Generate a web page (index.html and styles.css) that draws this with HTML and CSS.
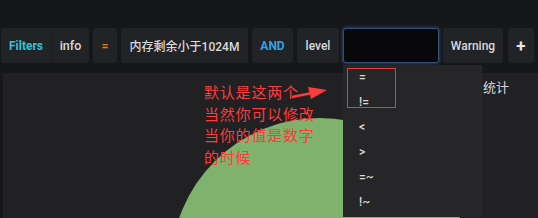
FILE: index.html
```html
<!DOCTYPE html>
<html lang="zh">
<head>
<meta charset="utf-8">
<link rel="stylesheet" href="styles.css">
</head>
<body>
<div class="page">
  <div class="bar">
    <div class="seg seg-filters first kw-cyan">Filters</div>
    <div class="seg seg-info">info</div>
    <div class="seg seg-op op">=</div>
    <div class="seg seg-value">内存剩余小于1024M</div>
    <div class="seg seg-and kw-blue">AND</div>
    <div class="seg seg-level">level</div>
    <div class="seg seg-input input"></div>
    <div class="seg seg-warning">Warning</div>
    <div class="seg seg-plus plus">+</div>
  </div>
  <div class="panel">
    <div class="panel-title">统计</div>
    <div class="pie"></div>
  </div>

  <div class="note">
    <div class="note-line">默认是这两个</div>
    <div class="note-line">当然你可以修改</div>
    <div class="note-line">当你的值是数字</div>
    <div class="note-line">的时候</div>
  </div>
  <svg class="arrow" width="40" height="20" viewBox="0 0 40 20">
    <line x1="2" y1="10" x2="22" y2="6" stroke="#ff3b3b" stroke-width="2.5"/>
    <polygon points="18,0 37,3 21,12" fill="#ff3b3b"/>
  </svg>

  <ul class="menu">
    <li>=</li>
    <li>!=</li>
    <li>&lt;</li>
    <li>&gt;</li>
    <li>=~</li>
    <li>!~</li>
  </ul>
  <div class="highlight"></div>
</div>
</body>
</html>
```

FILE: styles.css
```css
html, body {
  margin: 0;
  padding: 0;
  background: #161719;
  width: 538px;
  height: 218px;
  overflow: hidden;
  font-family: Roboto, "Noto Sans CJK SC", sans-serif;
}

.page {
  position: relative;
  width: 538px;
  height: 218px;
}

.bar {
  display: flex;
  gap: 4px;
  padding-top: 28px;
  padding-left: 1px;
}

.seg {
  height: 35px;
  box-sizing: border-box;
  display: flex;
  align-items: center;
  justify-content: center;
  background: #222326;
  border-radius: 3px;
  color: #d8d9da;
  font-size: 12px;
  font-weight: 500;
  white-space: nowrap;
}

.seg-filters { width: 51px; border-radius: 3px 0 0 3px; border-right: 1px solid #1c1d20; margin-right: -4px; }
.seg-info { width: 37px; border-radius: 0 3px 3px 0; font-size: 12.5px; }
.seg-op { width: 24px; }
.seg-value { width: 127px; }
.seg-and { width: 41px; }
.seg-level { width: 42px; }
.seg-input { width: 96px; }
.seg-warning { width: 60px; }
.seg-plus { width: 26px; margin-left: 1px; }

.kw-cyan { color: #33c2d6; font-weight: 700; }
.kw-blue { color: #33a2e5; font-weight: 700; }
.op { color: #eb7b18; font-weight: 700; }
.plus { color: #e6e6e6; font-size: 17px; font-weight: 700; }

.input {
  background: #08080a;
  border: 1px solid #34507a;
  box-shadow: 0 0 3px 1px rgba(51, 90, 150, 0.6);
}

.panel {
  position: relative;
  margin: 10px 0 0 3px;
  height: 145px;
  background: #212124;
  border-radius: 2px 0 0 0;
  overflow: hidden;
}

.panel-title {
  padding: 7px 0 0 480px;
  color: #d8d9da;
  font-size: 13px;
  line-height: 16px;
}

.pie {
  position: absolute;
  left: 168px;
  top: 45px;
  width: 297px;
  height: 297px;
  border-radius: 50%;
  background: #7eb26d;
}

.note {
  position: absolute;
  left: 204px;
  top: 81px;
  color: #ff3b3b;
  font-family: "Noto Sans CJK SC", sans-serif;
  font-size: 15px;
  letter-spacing: 0.8px;
}

.note-line {
  height: 21.5px;
  line-height: 21.5px;
}

.arrow {
  position: absolute;
  left: 290px;
  top: 87px;
}

.menu {
  position: absolute;
  left: 343px;
  top: 65px;
  width: 139px;
  height: 152px;
  margin: 0;
  padding: 0;
  list-style: none;
  background: #262628;
  border-right: 1px solid #2b2b2e;
  box-sizing: border-box;
}

.menu li {
  height: 25px;
  line-height: 25px;
  padding-left: 16px;
  color: #d8d9da;
  font-size: 12px;
  font-weight: 500;
}

.highlight {
  position: absolute;
  left: 347px;
  top: 68px;
  width: 49px;
  height: 40px;
  box-sizing: border-box;
  border: 1px solid #e83a3a;
}
```
